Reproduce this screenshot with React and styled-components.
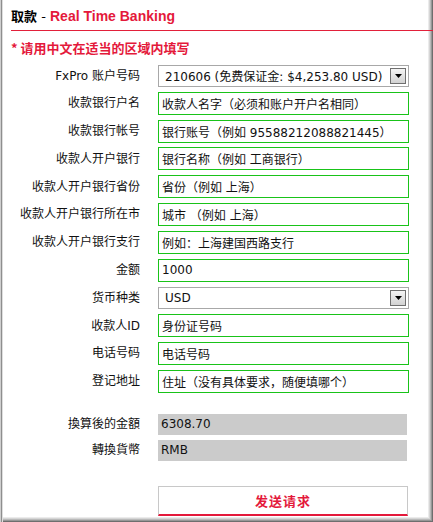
import styled, { createGlobalStyle } from "styled-components"

const GlobalStyle = createGlobalStyle`
    body {
        margin: 0;
        background: #ffffff;
    }
`

const latin = `"DejaVu Sans", "Noto Sans CJK SC", sans-serif`
const cjk = `"Noto Sans CJK SC", "DejaVu Sans", sans-serif`

const rows = [
    { label: "收款银行户名", value: "收款人名字（必须和账户开户名相同）" },
    { label: "收款银行帐号", value: "银行账号（例如 95588212088821445）" },
    { label: "收款人开户银行", value: "银行名称（例如 工商银行）" },
    { label: "收款人开户银行省份", value: "省份（例如 上海）" },
    { label: "收款人开户银行所在市", value: "城市 （例如 上海）" },
    { label: "收款人开户银行支行", value: "例如：上海建国西路支行" },
    { label: "金额", value: "1000" },
]

const rows2 = [
    { label: "收款人ID", value: "身份证号码" },
    { label: "电话号码", value: "电话号码" },
    { label: "登记地址", value: "住址（没有具体要求，随便填哪个）" },
]

function SelectBox({ text }) {
    return (
        <Select>
            <span>{text}</span>
            <Arrow>
                <svg width="7" height="4" viewBox="0 0 7 4">
                    <path d="M0 0h7L3.5 4z" fill="#000" />
                </svg>
            </Arrow>
        </Select>
    )
}

export default function App() {
    return (
        <>
            <GlobalStyle />
            <Frame>
                <Header>
                    <strong>取款</strong>
                    <span className="dash"> - </span>
                    <span className="brand">Real Time Banking</span>
                </Header>
                <Notice>* 请用中文在适当的区域内填写</Notice>
                <Form>
                    <Label>FxPro 账户号码</Label>
                    <SelectBox text="210606 (免费保证金: $4,253.80 USD)" />
                    {rows.map((r) => (
                        <Row key={r.label}>
                            <Label>{r.label}</Label>
                            <Field readOnly defaultValue={r.value} />
                        </Row>
                    ))}
                    <Label>货币种类</Label>
                    <SelectBox text="USD" />
                    {rows2.map((r) => (
                        <Row key={r.label}>
                            <Label>{r.label}</Label>
                            <Field readOnly defaultValue={r.value} />
                        </Row>
                    ))}
                </Form>
                <Result>
                    <Label>換算後的金額</Label>
                    <Readout>6308.70</Readout>
                    <Label>轉換貨幣</Label>
                    <Readout>RMB</Readout>
                </Result>
                <Actions>
                    <SendButton>发送请求</SendButton>
                </Actions>
            </Frame>
        </>
    )
}

const Frame = styled.div`
    width: 433px;
    height: 522px;
    box-sizing: border-box;
    padding-left: 11px;
    background: #ffffff;
    overflow: hidden;
    box-shadow:
        inset 1px 0 0 #cfcfcf,
        inset 2px 0 0 #8e8e8e,
        inset 3px 0 0 #dedede,
        inset -1px -1px 0 #6e6e6e,
        inset -2px -2px 0 #979797,
        inset -3px -3px 0 #bababa,
        inset -4px -4px 0 #d6d6d6,
        inset -5px -5px 0 #ebebeb;
`

const Header = styled.div`
    height: 31px;
    box-sizing: border-box;
    padding-top: 8px;
    border-bottom: 1px solid #e2203a;
    font-family: ${latin};
    font-size: 13px;
    line-height: 16px;
    color: #000;

    strong {
        font-family: ${cjk};
        font-weight: 700;
        font-size: 13px;
    }

    .dash {
        color: #000;
    }

    .brand {
        font-family: "Liberation Sans", sans-serif;
        color: #e4193b;
        font-weight: 700;
        font-size: 14px;
    }
`

const Notice = styled.p`
    margin: 9px 0 0;
    height: 16px;
    font-family: ${cjk};
    font-weight: 700;
    font-size: 13px;
    line-height: 16px;
    color: #e4193b;
`

const Form = styled.div`
    margin-top: 8px;
    display: grid;
    grid-template-columns: 129px 251px;
    column-gap: 18px;
    row-gap: 4.8px;
    grid-auto-rows: 23px;
    align-items: center;
`

const Row = styled.div`
    display: contents;
`

const Label = styled.div`
    text-align: right;
    font-family: ${latin};
    font-size: 12px;
    line-height: 16px;
    color: #111;
    white-space: nowrap;
`

const Field = styled.input`
    box-sizing: border-box;
    width: 251px;
    height: 23px;
    margin: 0;
    padding: 0 0 0 3px;
    border: 1px solid #19c319;
    outline: none;
    background: #fff;
    font-family: ${latin};
    font-size: 12px;
    color: #111;
`

const Select = styled.div`
    box-sizing: border-box;
    width: 251px;
    height: 22px;
    display: flex;
    align-items: center;
    justify-content: space-between;
    padding: 0 2px 0 6px;
    border: 1px solid #a8a8a8;
    background: #fff;
    font-family: ${latin};
    font-size: 12px;
    color: #111;
    white-space: nowrap;
`

const Arrow = styled.div`
    box-sizing: border-box;
    width: 16px;
    height: 16px;
    display: flex;
    align-items: center;
    justify-content: center;
    border: 1px solid #6f6f6f;
    background: linear-gradient(#f4f4f4, #d2d2d2);
`

const Result = styled.div`
    margin-top: 21px;
    display: grid;
    grid-template-columns: 129px 249px;
    column-gap: 18px;
    row-gap: 5px;
    grid-auto-rows: 21px;
    align-items: center;
`

const Readout = styled.div`
    height: 21px;
    padding-left: 3px;
    background: #cbcbcb;
    font-family: ${latin};
    font-size: 12px;
    line-height: 21px;
    color: #111;
`

const Actions = styled.div`
    margin-top: 25px;
    padding-left: 147px;
`

const SendButton = styled.button`
    box-sizing: border-box;
    width: 250px;
    height: 30px;
    margin: 0;
    padding: 0;
    border: 1px solid #c8c8c8;
    border-bottom: 2px solid #e4193b;
    background: #fff;
    font-family: ${cjk};
    font-weight: 700;
    font-size: 13px;
    letter-spacing: 1px;
    color: #e4193b;
`
